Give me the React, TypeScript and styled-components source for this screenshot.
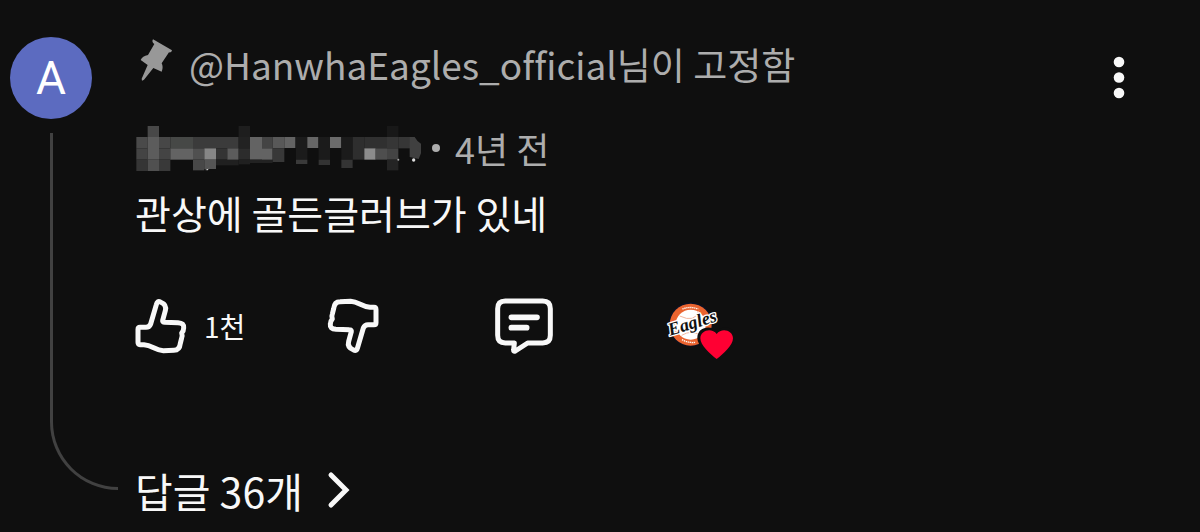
import React from "react";
import styled, { createGlobalStyle } from "styled-components";

const GlobalStyle = createGlobalStyle`
  * { box-sizing: border-box; }
  body {
    margin: 0;
    background: #0f0f0f;
    color: #f8f8f8;
    font-family: "Noto Sans CJK KR", sans-serif;
    font-variant-ligatures: none;
  }
`;

const Comment = styled.article`
  display: flex;
  align-items: stretch;
  padding: 34px 74px 12px 10px;
`;

const Rail = styled.div`
  display: flex;
  flex-direction: column;
  flex: none;
  width: 125px;
  padding-top: 3px;
`;

const Avatar = styled.a`
  display: flex;
  align-items: center;
  justify-content: center;
  width: 82px;
  height: 82px;
  border-radius: 50%;
  background: #5c6bc0;
  color: #fff;
  font: 400 46px/48px Roboto, sans-serif;
  text-decoration: none;
`;

const Thread = styled.div`
  flex: 1;
  width: 68px;
  margin: 14px 0 32px 40px;
  border: solid #414141;
  border-width: 0 0 3px 3px;
  border-bottom-left-radius: 68px;
`;

const Body = styled.div`
  display: flex;
  flex-direction: column;
  align-items: stretch;
  flex: 1;
  min-width: 0;
`;

const Row = styled.div`
  display: flex;
  align-items: center;
  height: 60px;
  color: #adadad;
  font-size: 36px;
  line-height: 60px;
  white-space: nowrap;
`;

const Pinned = styled(Row)`
  align-items: flex-start;
  gap: 14px;
  padding-left: 4px;
  font-size: 37px;
`;

const Meta = styled(Row)`
  gap: 11px;
  margin-top: 24px;
`;

const Dot = styled.span`
  width: 8px;
  height: 8px;
  margin-right: 4px;
  border-radius: 50%;
  background: #adadad;
`;

const Message = styled.p`
  margin: 4px 0 0;
  font-size: 39px;
  line-height: 60px;
`;

const Actions = styled.div`
  display: grid;
  grid-template-columns: 192px 168px 168px max-content;
  align-items: center;
  height: 68px;
  margin-top: 50px;
`;

const IconButton = styled.button`
  display: flex;
  align-items: center;
  gap: 17px;
  padding: 0;
  border: 0;
  background: none;
  color: inherit;
  font: inherit;
  font-size: 28px;
  line-height: 40px;
  cursor: pointer;
`;

const MenuButton = styled(IconButton)`
  align-self: flex-start;
  flex: none;
  margin-top: 22px;
`;

const Replies = styled(IconButton)`
  gap: 24px;
  margin-top: 98px;
  font-size: 41px;
  line-height: 64px;
`;

const Svg = styled.svg`
  display: block;
  flex: none;
`;

function PinIcon() {
  return (
    <Svg width="36" height="50" viewBox="420 38 108 150" fill="#989898" aria-hidden="true">
      <path d="M462 54 519 87Q518 95 510 93L488 126Q494 138 488 151L463 140 435 175 429 178 428 172 446 131 425 116Q430 104 447 101L466 68Q457 62 462 54Z" />
    </Svg>
  );
}

/* x, y, width, height, shade of each block covering the user name */
const blocks: [number, number, number, number, string][] = [
  [51, 66, 34, 34, "#4a4a4a"], [51, 100, 34, 34, "#444"], [51, 134, 34, 34, "#353535"],
  [85, 33, 34, 33, "#484848"], [85, 66, 34, 68, "#5c5c5c"], [85, 134, 34, 34, "#505050"],
  [119, 66, 34, 34, "#474747"], [119, 100, 34, 34, "#444"], [119, 134, 34, 34, "#393939"],
  [153, 66, 68, 34, "#464846"], [153, 100, 68, 34, "#636363"],
  [221, 66, 137, 34, "#3b3b3b"], [221, 100, 34, 34, "#505050"], [221, 134, 34, 32, "#484848"],
  [255, 100, 35, 34, "#868686"], [255, 134, 35, 28, "#555"],
  [290, 100, 34, 34, "#343434"], [290, 134, 68, 17, "#202020"], [324, 100, 34, 34, "#5c5c5c"],
  [358, 33, 34, 33, "#1e1e1e"], [358, 66, 34, 34, "#222"], [358, 100, 34, 34, "#2c2c2c"], [358, 134, 34, 14, "#202020"],
  [392, 66, 36, 68, "#636363"], [392, 134, 68, 10, "#222"], [428, 66, 32, 34, "#444"], [428, 100, 32, 34, "#636363"],
  [460, 66, 35, 34, "#585858"], [460, 100, 35, 41, "#383838"], [495, 66, 33, 33, "#636363"],
  [530, 66, 34, 68, "#1b1b1b"], [530, 134, 34, 13, "#3a3a3a"], [564, 66, 33, 33, "#666"],
  [598, 66, 34, 68, "#1b1b1b"], [598, 134, 34, 16, "#333"], [632, 66, 34, 33, "#6b6b6b"],
  [666, 66, 34, 68, "#1b1b1b"], [666, 134, 34, 25, "#343434"], [700, 66, 35, 68, "#2e2e2e"],
  [735, 66, 68, 34, "#303030"], [735, 100, 34, 34, "#8c8c8c"], [769, 100, 34, 34, "#4e4e4e"],
  [803, 33, 34, 33, "#181818"], [803, 66, 34, 34, "#363636"], [803, 100, 34, 34, "#444"], [803, 134, 34, 32, "#242424"],
  [837, 66, 35, 34, "#363636"],
];

function MaskedName() {
  return (
    <Svg width="286" height="46" viewBox="47 30 858 138" aria-hidden="true">
      {blocks.map(([x, y, w, h, fill]) => (
        <rect key={`${x}-${y}`} x={x} y={y} width={w} height={h} fill={fill} />
      ))}
      <path d="M871 66H886Q892 78 905 86V115L898 132 871 126Z" fill="#404040" />
      <path d="M257 165 268 161 265 166Z" fill="#eee" />
      <circle cx="837" cy="134" r="3" fill="#aaa" />
      <circle cx="883" cy="135" r="5" fill="#ddd" />
    </Svg>
  );
}

function ThumbIcon({ down = false }: { down?: boolean }) {
  return (
    <Svg
      width="52"
      height="56"
      viewBox="43 48 156 168"
      fill="none"
      stroke="#f8f8f8"
      strokeWidth="15"
      strokeLinejoin="round"
      strokeLinecap="round"
      aria-hidden="true"
    >
      <path
        transform={down ? "rotate(180 121 132)" : undefined}
        d="M58 136H76Q86 136 90 126L107 68Q110 55 119 60 139 68 134 86L126 115Q125 121 132 121L172 122Q191 123 189 138 189 147 183 153 186 162 183 168L179 184Q177 205 160 205L128 206C104 205 95 190 70 188H58Q52 188 52 181V142Q52 136 58 136Z"
      />
    </Svg>
  );
}

function CommentIcon() {
  return (
    <Svg width="58" height="56" viewBox="43 55 174 168" fill="none" stroke="#f8f8f8" strokeLinejoin="round" strokeLinecap="round" aria-hidden="true">
      <path strokeWidth="15" d="M74 64H186Q209 64 209 87V167Q209 190 186 190H141L104 214Q98 217 99 210L101 190H74Q51 190 51 167V87Q51 64 74 64Z" />
      <path strokeWidth="17" d="M92 113H169M92 144H138" />
    </Svg>
  );
}

function CreatorHeart() {
  return (
    <Svg width="72" height="68" viewBox="549 36 216 204" aria-hidden="true">
      <circle cx="632" cy="133" r="67" fill="#0b1020" />
      <circle cx="632" cy="134" r="63" fill="#ea6430" />
      <circle cx="632" cy="134" r="45" fill="#fff" />
      <path d="M599 108Q645 130 657 92M605 166Q635 148 661 166" fill="none" stroke="#f3b79f" strokeWidth="3" />
      <path d="M607 87Q631 78 655 87M606 179Q628 190 647 187" fill="none" stroke="#fff" strokeWidth="4" strokeDasharray="4 2" />
      <text
        x="570"
        y="167"
        transform="rotate(-17 570 167)"
        fill="#111"
        stroke="#fff"
        strokeWidth="8"
        strokeLinejoin="round"
        paintOrder="stroke"
        fontFamily="Liberation Serif, serif"
        fontSize="54"
        fontStyle="italic"
        fontWeight="700"
      >
        Eagles
      </text>
      <path d="M710 246C686 229 652 198 652 174 652 140 693 134 710 153 727 134 768 140 768 174 768 198 734 229 710 246Z" fill="#0f0f0f" />
      <path d="M710 237C690 222 661 196 661 175 661 150 696 142 710 162 724 142 759 150 759 175 759 196 730 222 710 237Z" fill="#ff0033" />
    </Svg>
  );
}

function KebabIcon() {
  return (
    <Svg width="14" height="44" viewBox="0 0 14 44" fill="#f8f8f8" aria-hidden="true">
      <circle cx="7" cy="6" r="5.3" />
      <circle cx="7" cy="21.5" r="5.3" />
      <circle cx="7" cy="37" r="5.3" />
    </Svg>
  );
}

function ChevronIcon() {
  return (
    <Svg width="24" height="38" viewBox="0 0 24 38" fill="none" stroke="#f8f8f8" strokeWidth="5" strokeLinecap="round" strokeLinejoin="miter" aria-hidden="true">
      <path d="M4 4 19 19 4 34" />
    </Svg>
  );
}

export default function App() {
  return (
    <>
      <GlobalStyle />
      <Comment>
        <Rail>
          <Avatar href="#channel">A</Avatar>
          <Thread />
        </Rail>
        <Body>
          <Pinned>
            <PinIcon />
            <span>@HanwhaEagles_official님이 고정함</span>
          </Pinned>
          <Meta>
            <MaskedName />
            <Dot />
            <span>4년 전</span>
          </Meta>
          <Message>관상에 골든글러브가 있네</Message>
          <Actions>
            <IconButton type="button" aria-label="좋아요 1천">
              <ThumbIcon />
              <span>1천</span>
            </IconButton>
            <IconButton type="button" aria-label="싫어요">
              <ThumbIcon down />
            </IconButton>
            <IconButton type="button" aria-label="답글">
              <CommentIcon />
            </IconButton>
            <IconButton type="button" aria-label="하트">
              <CreatorHeart />
            </IconButton>
          </Actions>
          <Replies type="button">
            <span>답글 36개</span>
            <ChevronIcon />
          </Replies>
        </Body>
        <MenuButton type="button" aria-label="메뉴">
          <KebabIcon />
        </MenuButton>
      </Comment>
    </>
  );
}
